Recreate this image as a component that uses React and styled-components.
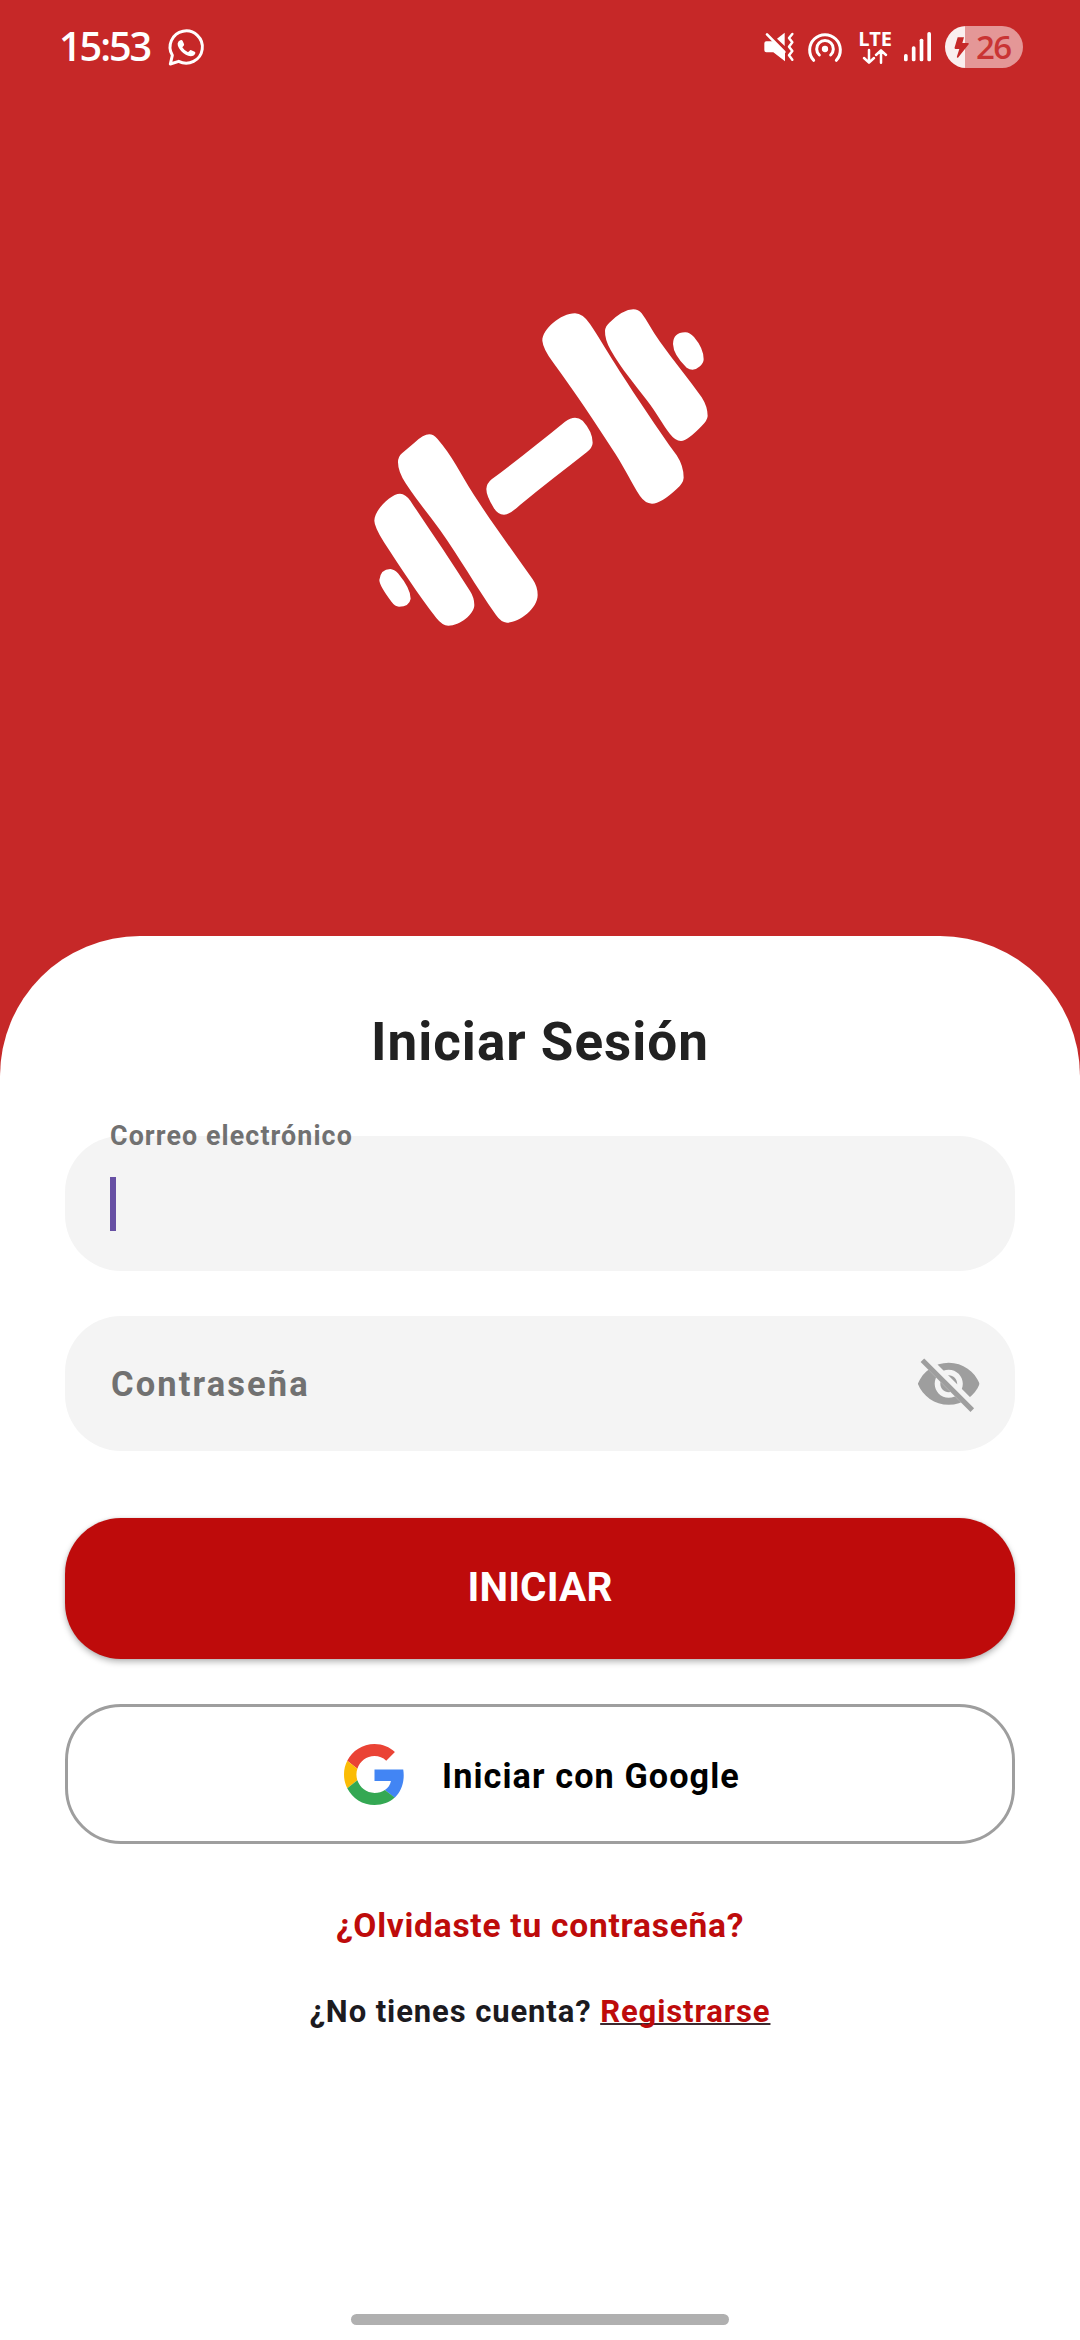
import React from "react";
import styled, { createGlobalStyle } from "styled-components";

const GlobalStyle = createGlobalStyle`
  * { box-sizing: border-box; }
  body { margin: 0; background: #fff; }
  button { font: inherit; }
`;

const Screen = styled.main`
  width: 1080px;
  height: 2340px;
  display: flex;
  flex-direction: column;
  overflow: hidden;
  background: #c62828;
  font-family: Roboto, "Liberation Sans", sans-serif;
  font-weight: 700;
`;

const StatusBar = styled.header`
  height: 94px;
  flex: none;
  display: flex;
  justify-content: space-between;
  align-items: center;
  padding: 0 57px 0 59px;
  color: #fff;
  font-family: "Open Sans", "Noto Sans", sans-serif;
`;

const StatusGroup = styled.div`
  display: flex;
  align-items: center;
  height: 100%;
`;

const Clock = styled.time`
  width: 109px;
  padding-bottom: 3px;
  font-size: 39.5px;
  font-weight: 600;
  line-height: 54px;
  letter-spacing: -2px;
  white-space: nowrap;
`;

const Glyph = styled.svg`
  display: block;
  flex: none;
  overflow: visible;
  width: ${(p) => p.$w}px;
  height: ${(p) => p.$h}px;
  margin-left: ${(p) => p.$gap || 0}px;
`;

const Network = styled.div`
  display: flex;
  flex-direction: column;
  align-items: center;
  width: 34px;
  margin-left: 16px;
`;

const NetworkType = styled.span`
  margin-bottom: 2px;
  font-size: 20px;
  font-weight: 700;
  line-height: 17px;
  letter-spacing: -0.2px;
`;

const Battery = styled.div`
  display: flex;
  align-items: center;
  width: 78px;
  height: 42px;
  margin-left: 14px;
  padding-left: 9px;
  border-radius: 21px;
  color: #c93434;
  background: linear-gradient(to right, #faeeee 20px, #e49797 20px);
`;

const BatteryLevel = styled.span`
  margin-left: 7px;
  font-size: 33px;
  font-weight: 600;
  line-height: 42px;
  letter-spacing: -1.6px;
`;

const Hero = styled.section`
  height: 842px;
  flex: none;
  display: flex;
  justify-content: center;
  padding-top: 196px;
`;

const Sheet = styled.section`
  flex: 1;
  display: flex;
  flex-direction: column;
  padding: 76px 65px 15px;
  border-radius: 140px 140px 0 0;
  background: #fff;
`;

const Title = styled.h1`
  margin: 0 0 64px;
  color: #212121;
  font-size: 53px;
  line-height: 60px;
  letter-spacing: 1px;
  text-align: center;
`;

const Field = styled.div`
  position: relative;
  display: flex;
  align-items: center;
  height: 135px;
  margin-bottom: ${(p) => p.$below}px;
  padding: 0 33px 0 45px;
  border-radius: 56px;
  background: #f4f4f4;
  color: #717171;
`;

const FloatingLabel = styled.label`
  position: absolute;
  left: 45px;
  top: -17px;
  font-size: 26.8px;
  line-height: 34px;
  letter-spacing: 1.1px;
  white-space: nowrap;
`;

const Caret = styled.span`
  width: 6px;
  height: 54px;
  margin-top: 1px;
  background: #6750a4;
`;

const Placeholder = styled.span`
  flex: 1;
  padding: 1px 0 0 1px;
  font-size: 34.5px;
  line-height: 42px;
  letter-spacing: 2.1px;
`;

const PrimaryButton = styled.button`
  height: 141px;
  margin-bottom: 45px;
  padding: 0 0 3px;
  border: 0;
  border-radius: 56px;
  background: #be0b0b;
  color: #fff;
  font-size: 40.5px;
  letter-spacing: 0.15px;
  box-shadow: 0 3px 6px rgba(0, 0, 0, 0.28), 0 0 3px rgba(0, 0, 0, 0.1);
`;

const GoogleButton = styled.button`
  display: flex;
  align-items: center;
  justify-content: center;
  gap: 37px;
  height: 140px;
  padding: 0 0 0 4px;
  border: 3px solid #9e9e9e;
  border-radius: 56px;
  background: #fff;
  color: #000;
  font-size: 34.2px;
  letter-spacing: 1.1px;
`;

const GoogleLabel = styled.span`
  padding-top: 3px;
`;

const TextLink = styled.a`
  color: #be0b0b;
`;

const Line = styled.p`
  margin: ${(p) => p.$above}px 0 0;
  color: #1c1b1f;
  font-size: ${(p) => p.$size}px;
  line-height: 40px;
  letter-spacing: ${(p) => p.$spacing}px;
  text-align: center;
  white-space: nowrap;
`;

const RegisterLink = styled(TextLink)`
  text-decoration: underline 2px #3a2a30;
  text-decoration-skip-ink: none;
  text-underline-offset: 1px;
`;

const HomeIndicator = styled.div`
  width: 378px;
  height: 11px;
  margin: auto auto 0;
  border-radius: 6px;
  background: #b0b0b0;
`;

function WhatsAppIcon() {
  return (
    <Glyph $w={37} $h={37} viewBox="384 56 111 111">
      <path
        d="M391 161 L397 135 A48.5 48.5 0 1 1 416 153 Z"
        fill="none"
        stroke="#fff"
        strokeWidth="9"
        strokeLinejoin="round"
      />
      <path
        d="M421 90 Q426 88 428 92 L432 101 Q433 104 431 106 L427 111 Q433 121 444 126 L449 121 Q451 118 454 120 L464 124 Q467 126 466 129 Q463 138 452 138 Q437 137 424 123 Q412 110 413 99 Q415 92 421 90Z"
        fill="#fff"
      />
    </Glyph>
  );
}

function MutedVibrateIcon() {
  return (
    <Glyph $w={30} $h={30} viewBox="71 66 90 90">
      <path d="M110 86 L133 68 V108 Z" fill="#fff" />
      <path d="M78 94 H97 L134 126 V154 L99 127 H78 Q72 127 72 121 V100 Q72 94 78 94Z" fill="#fff" />
      <path d="M80 73 L132 126" stroke="#fff" strokeWidth="8" strokeLinecap="round" />
      <path
        d="M156 72 L146 84 L156 97 L146 110 L156 123 L146 136 L156 149"
        fill="none"
        stroke="#fff"
        strokeWidth="7.5"
        strokeLinecap="round"
        strokeLinejoin="round"
      />
    </Glyph>
  );
}

function HotspotIcon() {
  return (
    <Glyph $w={34} $h={30} $gap={14} viewBox="204 66 102 90">
      <g fill="none" stroke="#fff" strokeWidth="9" strokeLinecap="round">
        <path d="M221 151 A46 46 0 1 1 289 151" />
        <path d="M238 135 A25 25 0 1 1 272 135" />
      </g>
      <circle cx="255" cy="117" r="9.5" fill="#fff" />
    </Glyph>
  );
}

function DataArrows() {
  return (
    <Glyph $w={24} $h={15} viewBox="367 116 72 45">
      <path
        d="M385 119 V156 M370 143 L385 157 L400 143 M421 157 V121 M406 134 L421 120 L436 134"
        fill="none"
        stroke="#fff"
        strokeWidth="7.5"
        strokeLinecap="round"
        strokeLinejoin="round"
      />
    </Glyph>
  );
}

function SignalIcon() {
  return (
    <Glyph $w={27} $h={30} $gap={12} viewBox="492 66 81 90">
      <g fill="#fff">
        <rect x="492" y="132" width="11" height="22" rx="5" />
        <rect x="515.5" y="109" width="11" height="45" rx="5" />
        <rect x="539" y="86" width="11" height="68" rx="5" />
        <rect x="562" y="66" width="11" height="88" rx="5" />
      </g>
    </Glyph>
  );
}

function BoltIcon() {
  return (
    <Glyph $w={15} $h={21} viewBox="643 80 45 63">
      <path
        d="M654 81 H673 L668 98 H685 Q689 99 687 102 L655 142 Q650 143 652 138 L659 116 H647 Q643 115 645 111Z"
        fill="#c62828"
      />
    </Glyph>
  );
}

function Dumbbell() {
  return (
    <Glyph $w={360} $h={350} viewBox="0 0 1080 1050" aria-label="Mancuerna">
      <g fill="#fff">
        <path d="M547 152 C547 118 602 70 645 70 Q668 70 690 102 C718 144 746 192 780 245 C832 325 890 412 950 496 Q971 528 971 563 Q970 580 950 597 Q903 641 876 641 Q855 640 840 618 C815 580 797 540 765 490 C708 400 640 300 580 218 Q549 177 547 152Z" />
        <path d="M735 122 Q736 109 748 98 Q790 58 820 58 Q835 58 845 70 C860 90 875 120 900 155 C940 212 985 264 1025 322 Q1043 350 1043 378 Q1042 392 1025 408 Q983 452 963 453 Q945 452 930 432 C907 402 892 372 860 330 C825 283 786 240 752 180 Q734 148 735 122Z" />
        <path d="M939 162 Q940 127 975 127 Q988 126 1002 141 Q1031 175 1031 208 Q1031 218 1020 229 Q1000 247 980 233 Q940 195 939 162Z" />
        <path d="M379 597 Q380 580 395 568 C470 512 540 456 615 395 Q645 373 668 392 Q698 425 698 458 Q698 472 680 487 C615 538 550 588 480 645 Q449 674 432 674 Q412 673 401 653 Q379 618 379 597Z" />
        <path d="M114 517 Q114 500 126 490 L165 457 Q190 433 208 433 Q220 433 232 446 C275 495 300 548 340 612 C400 705 460 785 518 868 Q533 890 533 915 C533 957 475 998 441 998 Q423 997 408 975 C345 885 300 805 240 720 C205 672 170 630 137 580 Q114 545 114 517Z" />
        <path d="M43 692 C43 660 93 611 120 611 Q137 612 151 632 C210 722 272 810 330 903 Q343 923 343 945 C343 972 300 1007 265 1007 Q247 1007 229 984 C172 911 120 830 72 757 Q43 710 43 692Z" />
        <path d="M58 870 Q62 837 91 837 Q103 838 114 850 Q152 896 152 926 Q148 950 117 950 Q105 950 95 936 Q58 887 58 870Z" />
      </g>
    </Glyph>
  );
}

function HiddenEyeIcon() {
  return (
    <Glyph $w={67.5} $h={67.5} viewBox="0 0 24 24" aria-label="Mostrar contraseña">
      <clipPath id="eye-cut">
        <path d="M2 4.27 L19.73 22 L22.27 19.46 L4.54 1.73 V1 H23 V23 H1 V4.27Z" />
      </clipPath>
      <path
        clipPath="url(#eye-cut)"
        fill="#9e9e9e"
        fillRule="evenodd"
        d="M12 4.5C7 4.5 2.73 7.61 1 12c1.73 4.39 6 7.5 11 7.5s9.27-3.11 11-7.5c-1.73-4.39-6-7.5-11-7.5zM12 17c-2.76 0-5-2.24-5-5s2.24-5 5-5 5 2.24 5 5-2.24 5-5 5zM12 9c-1.66 0-3 1.34-3 3s1.34 3 3 3 3-1.34 3-3-1.34-3-3-3z"
      />
      <path d="M3.27 4.27 L19.74 20.74" stroke="#9e9e9e" strokeWidth="1.8" strokeLinecap="square" />
    </Glyph>
  );
}

function GoogleLogo() {
  return (
    <Glyph $w={61} $h={61} viewBox="0 0 48 48">
      <path fill="#EA4335" d="M24 9.5c3.54 0 6.71 1.22 9.21 3.6l6.85-6.85C35.9 2.38 30.47 0 24 0 14.62 0 6.51 5.38 2.56 13.22l7.98 6.19C12.43 13.72 17.74 9.5 24 9.5z" />
      <path fill="#4285F4" d="M46.98 24.55c0-1.57-.15-3.09-.38-4.55H24v9.02h12.94c-.58 2.96-2.26 5.48-4.78 7.18l7.73 6c4.51-4.18 7.09-10.36 7.09-17.65z" />
      <path fill="#FBBC05" d="M10.53 28.59c-.48-1.45-.76-2.99-.76-4.59s.27-3.14.76-4.59l-7.98-6.19C.92 16.46 0 20.12 0 24c0 3.88.92 7.54 2.56 10.78l7.97-6.19z" />
      <path fill="#34A853" d="M24 48c6.48 0 11.93-2.13 15.89-5.81l-7.73-6c-2.15 1.45-4.92 2.3-8.16 2.3-6.26 0-11.57-4.22-13.47-9.91l-7.98 6.19C6.51 42.62 14.62 48 24 48z" />
    </Glyph>
  );
}

export default function App() {
  return (
    <>
      <GlobalStyle />
      <Screen>
        <StatusBar>
          <StatusGroup>
            <Clock>15:53</Clock>
            <WhatsAppIcon />
          </StatusGroup>
          <StatusGroup>
            <MutedVibrateIcon />
            <HotspotIcon />
            <Network>
              <NetworkType>LTE</NetworkType>
              <DataArrows />
            </Network>
            <SignalIcon />
            <Battery>
              <BoltIcon />
              <BatteryLevel>26</BatteryLevel>
            </Battery>
          </StatusGroup>
        </StatusBar>
        <Hero>
          <Dumbbell />
        </Hero>
        <Sheet>
          <Title>Iniciar Sesión</Title>
          <Field $below={45}>
            <FloatingLabel>Correo electrónico</FloatingLabel>
            <Caret />
          </Field>
          <Field $below={67}>
            <Placeholder>Contraseña</Placeholder>
            <HiddenEyeIcon />
          </Field>
          <PrimaryButton type="button">INICIAR</PrimaryButton>
          <GoogleButton type="button">
            <GoogleLogo />
            <GoogleLabel>Iniciar con Google</GoogleLabel>
          </GoogleButton>
          <Line $above={62} $size={33.5} $spacing={0.75}>
            <TextLink>¿Olvidaste tu contraseña?</TextLink>
          </Line>
          <Line $above={46} $size={31} $spacing={0.9}>
            ¿No tienes cuenta? <RegisterLink>Registrarse</RegisterLink>
          </Line>
          <HomeIndicator />
        </Sheet>
      </Screen>
    </>
  );
}
